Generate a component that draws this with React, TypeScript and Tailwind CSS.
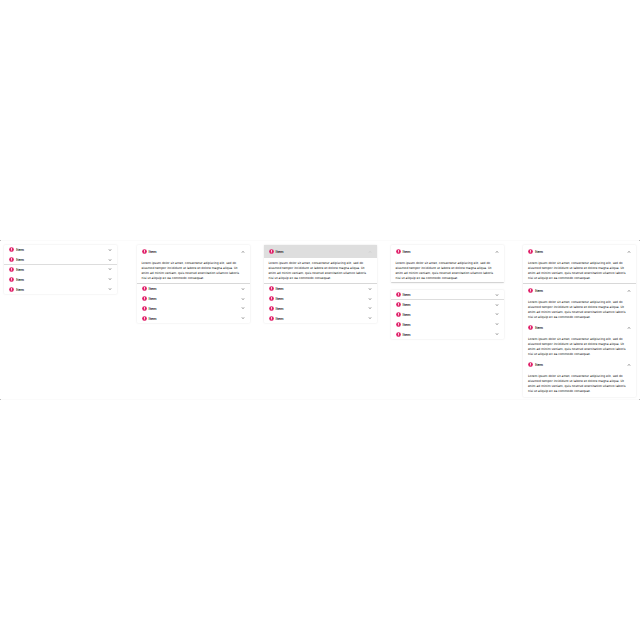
import { useState } from "react";

const lorem = [
  "Lorem ipsum dolor sit amet, consectetur adipiscing elit, sed do",
  "eiusmod tempor incididunt ut labore et dolore magna aliqua. Ut",
  "enim ad minim veniam, quis nostrud exercitation ullamco laboris",
  "nisi ut aliquip ex ea commodo consequat.",
];

type HeaderProps = { open?: boolean; tall?: boolean; pressed?: boolean };

function Header({ open: initial = false, tall = false, pressed = false }: HeaderProps) {
  const [open, setOpen] = useState(initial);
  return (
    <button
      type="button"
      aria-expanded={open}
      onClick={() => setOpen(!open)}
      className={`flex w-full items-center gap-[2px] px-[5px] ${tall ? "h-[13px]" : "h-full"} ${pressed ? "bg-[#dedede]" : ""}`}
    >
      <svg viewBox="0 0 20 20" className="size-[5px] shrink-0" aria-hidden="true">
        <circle cx="10" cy="10" r="9.5" fill="#e01e68" />
        <path d="M10 4v8M10 14v3" stroke="#fff" strokeWidth="3" />
      </svg>
      <span className="flex-1 text-left text-[4px] leading-[5px] font-medium font-[Roboto,sans-serif]">Item</span>
      <svg viewBox="0 0 12 12" className="size-[4px] shrink-0" aria-hidden="true">
        <path
          d={open ? "M3 7.5l3-3 3 3" : "M3 4.5l3 3 3-3"}
          fill="none"
          stroke={pressed ? "#c4c4c4" : "#333333"}
          strokeWidth="2"
        />
      </svg>
    </button>
  );
}

function Body({ short = false }: { short?: boolean }) {
  return (
    <p className={`px-[5px] pt-[3px] text-[3px] leading-[5px] whitespace-nowrap text-black ${short ? "pb-px" : "pb-[3px]"}`}>
      {lorem.map((line) => (
        <span key={line} className="block">{line}</span>
      ))}
    </p>
  );
}

type ClosedProps = { count: number; ruleAt?: number };

function Closed({ count, ruleAt }: ClosedProps) {
  return (
    <ul className={count === 5 ? "grid h-[49px] grid-rows-5" : "grid h-[39px] grid-rows-4"}>
      {Array.from({ length: count }, (_, i) => (
        <li key={i} className={i === ruleAt ? "shadow-[0_-1px_#dddddd]" : ""}>
          <Header />
        </li>
      ))}
    </ul>
  );
}

const card = "rounded-[1px] bg-white shadow-[0_0_2px_rgba(0,0,0,0.13)]";
const rule = "shadow-[0_-1px_#d8d8d8]";

export default function App() {
  return (
    <main className="flex min-h-screen items-center bg-white text-[#111111] font-[DejaVu_Sans,sans-serif]">
      <div className="relative flex h-[160px] w-full items-start justify-between border-y border-[#fbfbfb] px-1 pt-1">
        <span className="absolute -top-px left-0 size-px bg-[#bbbbbb]" />
        <span className="absolute -top-px right-0 size-px bg-[#bbbbbb]" />
        <span className="absolute -bottom-px left-0 size-px bg-[#bbbbbb]" />
        <span className="absolute right-0 -bottom-px size-px bg-[#bbbbbb]" />
        <section className={`w-[113px] ${card}`}>
          <Closed count={5} ruleAt={2} />
        </section>
        <div className="flex items-start gap-[14px]">
          <section className={`w-[113px] ${card}`}>
            <Header open tall />
            <Body />
            <div className={rule}>
              <Closed count={4} />
            </div>
          </section>
          <section className={`w-[113px] ${card}`}>
            <Header open tall pressed />
            <Body />
            <div className={rule}>
              <Closed count={4} />
            </div>
          </section>
          <section className="flex w-[113px] flex-col gap-[6px]">
            <div className="rounded-[1px] border-b border-[#d4d4d4] bg-white shadow-[0_0_2px_rgba(0,0,0,0.13)]">
              <Header open tall />
              <Body short />
            </div>
            <div className={`mt-px ${card}`}>
              <Closed count={5} ruleAt={1} />
            </div>
          </section>
        </div>
        <section className={`w-[113px] ${card}`}>
          <Header open tall />
          <Body />
          <div className={rule}>
            <Header open tall />
            <Body short />
          </div>
          <Header open tall />
          <Body short />
          <Header open tall />
          <Body />
        </section>
      </div>
    </main>
  );
}
